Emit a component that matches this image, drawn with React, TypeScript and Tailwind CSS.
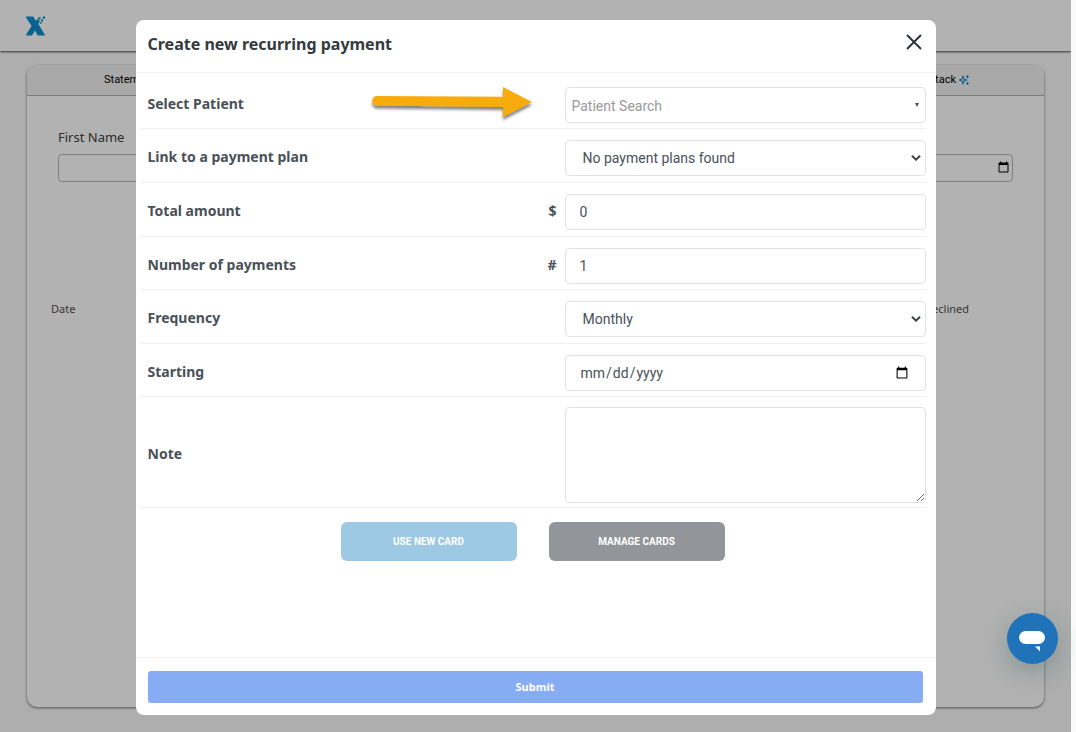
import React from "react";

type RowProps = {
  id: string;
  label: string;
  prefix?: string;
  space?: string;
  marker?: React.ReactNode;
  children: React.ReactNode;
};

const field =
  "block h-9 w-full rounded-[4px] border border-[#dee2e6] bg-white font-[Roboto,sans-serif] text-[14px] text-[#495057] outline-none";

function Row({ id, label, prefix, space = "pt-[11px] pb-1.5", marker, children }: RowProps) {
  return (
    <div className={`grid grid-cols-[417fr_361fr] border-b border-[#f0f0f0] pl-2 ${space}`}>
      <div className="flex items-center justify-between pr-2 pb-1 text-[14px] font-bold text-[#495057]">
        <label htmlFor={id}>{label}</label>
        {marker}
        {prefix && <span>{prefix}</span>}
      </div>
      <div className="relative">{children}</div>
    </div>
  );
}

function SelectField({ id, value }: { id: string; value: string }) {
  return (
    <>
      <select id={id} className={`${field} appearance-none pr-8 pl-[17px]`}>
        <option>{value}</option>
      </select>
      <svg className="pointer-events-none absolute top-3.5 right-1 h-2 w-3" viewBox="0 0 12 8" fill="none" stroke="#3b4248" strokeWidth="2">
        <path d="M2 1.8 6 5.6 10 1.8" />
      </svg>
    </>
  );
}

function Logo() {
  return (
    <svg className="h-5 w-5" viewBox="0 0 20 20" fill="#0d8fd0" aria-label="Home">
      <path d="M0 .5h7.2L10 5l1.6-2.2 2.4 2.4L12.4 8l6.9 11.5h-7.6L9 14.6 6 19.5H.2v-1.2L5.6 10 0 1.6z" />
      <path d="M12.3 1.3h2.2v2.2h-2.2zM15 3.6h2v2h-2zM16.8.6h2.2v2.2h-2.2zM14 6.2h1.6v1.6H14z" />
    </svg>
  );
}

function Sparkles() {
  return (
    <svg className="h-2.5 w-2.5" viewBox="0 0 10 10" fill="none" stroke="#1b86cf">
      <path d="M4 1.4 5 4 7.6 5 5 6 4 8.6 3 6 .4 5 3 4z" strokeWidth="1.1" />
      <path d="M8.4.2v3M6.9 1.7h3M8.4 7v2.8M7 8.4h2.8" strokeWidth="1" />
    </svg>
  );
}

function Arrow() {
  return (
    <svg className="-my-2 mr-5 h-10 w-[168px]" viewBox="0 0 168 40" aria-hidden="true">
      <defs>
        <filter id="arrow-shadow" x="-10%" y="-20%" width="120%" height="160%">
          <feDropShadow dx="0" dy="3" stdDeviation="1.6" floodColor="#000" floodOpacity="0.5" />
        </filter>
      </defs>
      <path
        d="M8 13 134 13.8V4L163 19 134 34V24L8 22.6A4.8 4.8 0 0 1 8 13z"
        fill="#f8ab0b"
        filter="url(#arrow-shadow)"
      />
    </svg>
  );
}

function Background() {
  return (
    <div className="flex min-h-screen flex-col bg-[#fafafa] pb-[25px]">
      <header className="flex h-[51px] items-center bg-white pl-[26px] shadow-[0_1px_2px_rgba(0,0,0,0.7)]">
        <Logo />
      </header>
      <main className="mx-[27px] mt-3.5 flex flex-1 flex-col rounded-[10px] bg-white shadow-[0_1px_3px_rgba(0,0,0,0.55)]">
        <nav className="flex h-[31px] items-center justify-between rounded-t-[8px] border-b border-[#b4b4b4] bg-[#f2f2f2] pr-[75px] pl-[77px] font-[Roboto,sans-serif] text-[11px] text-black">
          <a href="#statements">Statements</a>
          <a href="#stack" className="flex items-center gap-[3px]">
            etack <Sparkles />
          </a>
        </nav>
        <form className="flex items-end justify-between gap-8 pt-8 pr-[31px] pl-[31px]">
          <label className="block flex-1 text-[13px] text-[#404040]">
            First Name
            <input type="text" className="mt-1.5 block h-7 w-full rounded-[4px] border border-[#b8b8b8]" />
          </label>
          <input
            type="date"
            aria-label="Date"
            className="block h-7 flex-1 rounded-[4px] border border-[#b8b8b8] text-[13px]"
          />
        </form>
        <div className="flex justify-between pt-[119px] pr-[75px] pl-6 text-[11px] text-[#505050]">
          <span>Date</span>
          <span>Declined</span>
        </div>
      </main>
    </div>
  );
}

function PaymentDialog() {
  return (
    <section
      role="dialog"
      aria-labelledby="dialog-title"
      className="flex min-h-[695px] w-full max-w-[800px] flex-col rounded-[8px] bg-white"
    >
      <header className="flex h-[53px] items-center justify-between border-b border-[#f3f3f3] pr-3.5 pb-1 pl-3">
        <h1 id="dialog-title" className="text-[16px] font-bold text-[#343a40]">
          Create new recurring payment
        </h1>
        <button type="button" aria-label="Close" className="pb-1">
          <svg className="h-4 w-4" viewBox="0 0 16 16" fill="none" stroke="#263238" strokeWidth="1.9">
            <path d="M1 1 15 15M15 1 1 15" />
          </svg>
        </button>
      </header>
      <form className="flex flex-1 flex-col">
        <div className="flex-1 pr-2.5 pl-1">
          <Row id="patient" label="Select Patient" space="pt-[14px] pb-[5px]" marker={<Arrow />}>
            <input id="patient" type="text" placeholder="Patient Search" className={`${field} pt-0.5 pr-6 pl-1.5 placeholder:text-[#999999]`} />
            <svg className="pointer-events-none absolute top-4 right-[7px] h-1 w-1" viewBox="0 0 4 4" fill="#495057">
              <path d="M0 0h4L2 4z" />
            </svg>
          </Row>
          <Row id="plan" label="Link to a payment plan">
            <SelectField id="plan" value="No payment plans found" />
          </Row>
          <Row id="total" label="Total amount" prefix="$">
            <input id="total" type="text" defaultValue="0" className={`${field} px-3.5`} />
          </Row>
          <Row id="count" label="Number of payments" prefix="#" space="pt-[11px] pb-[5px]">
            <input id="count" type="text" defaultValue="1" className={`${field} px-3.5`} />
          </Row>
          <Row id="frequency" label="Frequency">
            <SelectField id="frequency" value="Monthly" />
          </Row>
          <Row id="starting" label="Starting" space="pt-[11px] pb-[5px]">
            <input id="starting" type="date" className={`${field} px-3.5`} />
          </Row>
          <Row id="note" label="Note" space="pt-2.5 pb-1">
            <textarea id="note" className="block h-24 w-full resize rounded-[4px] border border-[#dee2e6] p-2 text-[14px]" />
          </Row>
          <div className="flex justify-center gap-8 pt-3.5 font-[Roboto,sans-serif] text-[10px] font-bold text-white">
            <button type="button" className="h-[39px] w-44 rounded-[6px] bg-[#9dc9e4]">
              USE NEW CARD
            </button>
            <button type="button" className="h-[39px] w-44 rounded-[6px] bg-[#929599]">
              MANAGE CARDS
            </button>
          </div>
        </div>
        <footer className="border-t border-[#f3f3f3] pt-[13px] pr-[13px] pb-3 pl-3">
          <button type="submit" className="block h-8 w-full rounded-[3px] bg-[#86adf3] text-[11px] font-bold text-white">
            Submit
          </button>
        </footer>
      </form>
    </section>
  );
}

export default function App() {
  return (
    <div className="bg-[#fafafa] pr-[5px] font-['Noto_Sans',sans-serif]">
      <div className="relative overflow-hidden">
        <Background />
        <div className="absolute inset-0 flex items-start justify-center bg-black/30 pt-5">
          <PaymentDialog />
        </div>
      </div>
      <button
        type="button"
        aria-label="Open chat"
        className="fixed right-[18px] bottom-[68px] flex h-[51px] w-[51px] items-center justify-center rounded-full bg-[#2072b9] shadow-[0_8px_24px_rgba(30,80,80,0.3)]"
      >
        <svg className="h-7 w-7" viewBox="0 0 28 28" fill="#fff">
          <rect x="0" y="6" width="26" height="13" rx="6.5" />
          <path d="M16 21.500h5v5z" />
        </svg>
      </button>
    </div>
  );
}
